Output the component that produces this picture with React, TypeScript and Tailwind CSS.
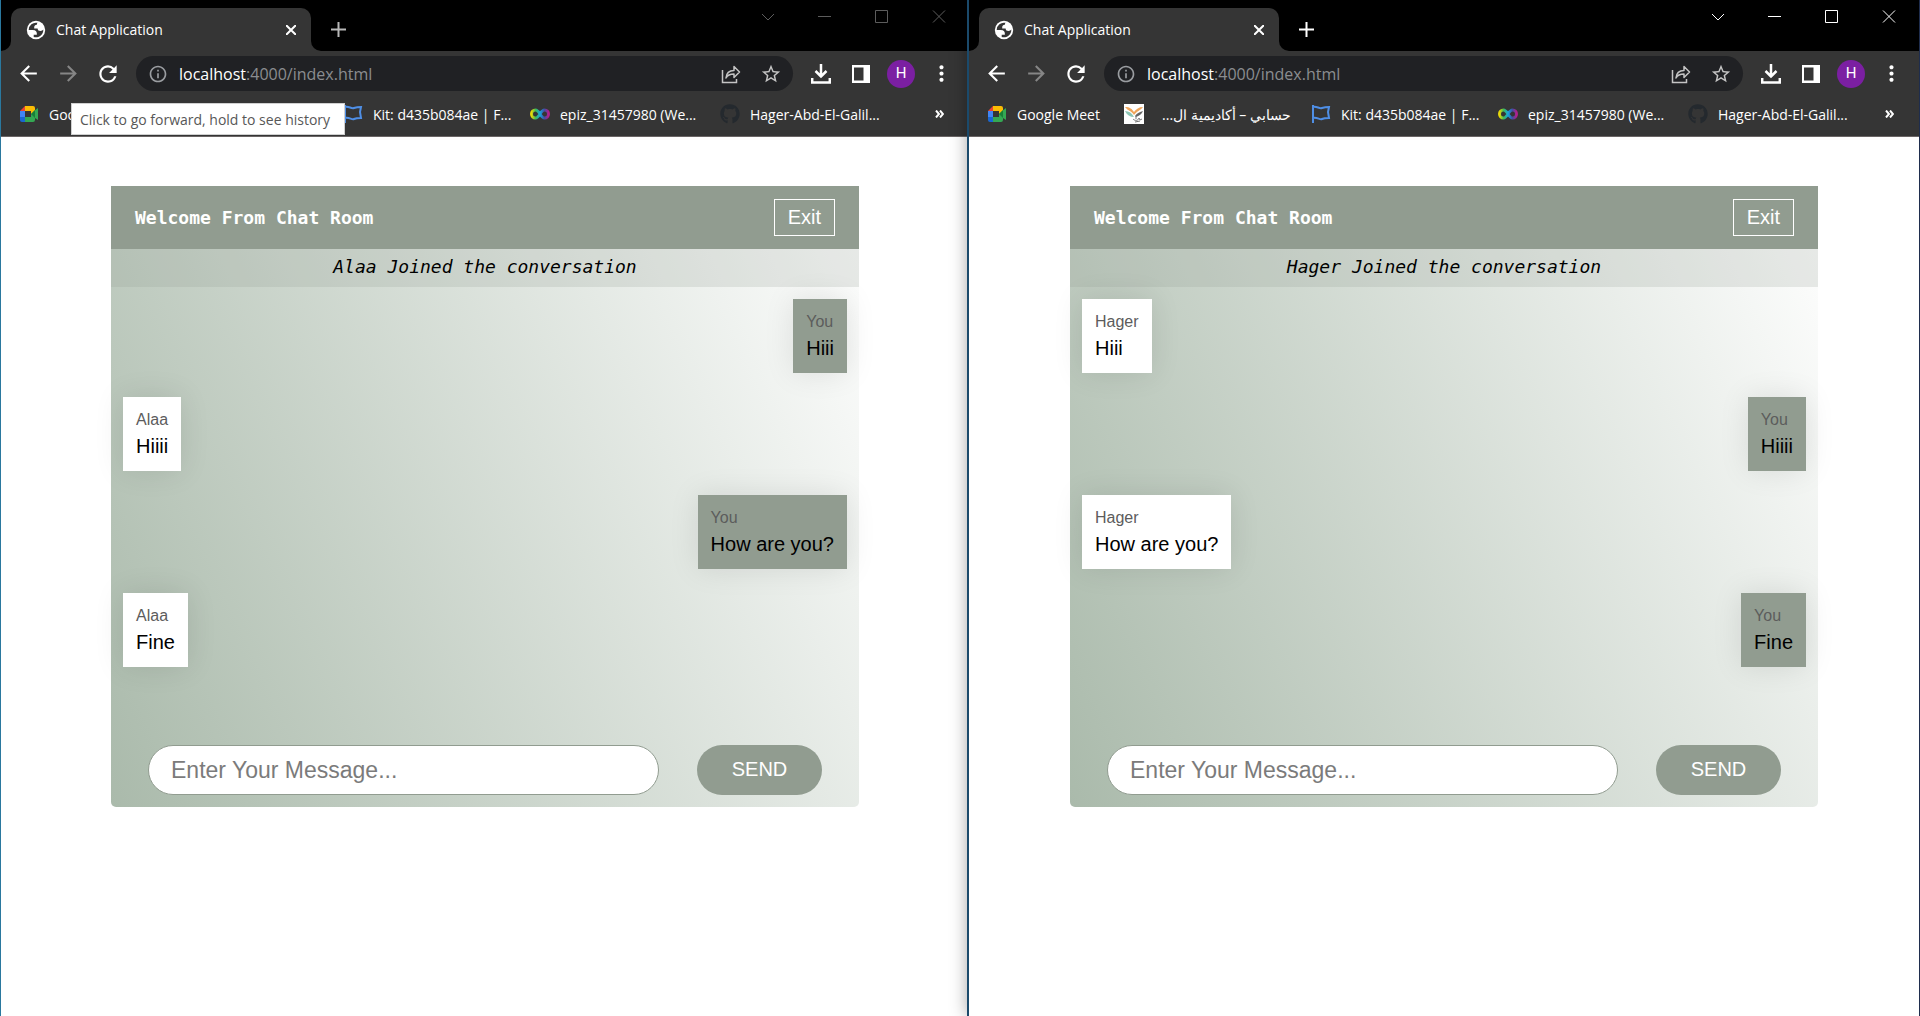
import type { ReactNode } from "react";
import {
  MdArrowBack,
  MdArrowForward,
  MdInfoOutline,
  MdMoreVert,
  MdRefresh,
  MdStarBorder,
} from "react-icons/md";
import { FaGithub } from "react-icons/fa";

type Message = { from: string; text: string };

function GlobeIcon() {
  return (
    <svg viewBox="0 0 24 24" className="size-[22px]">
      <circle cx="12" cy="12" r="10" fill="#fff" />
      <path
        fill="#353535"
        d="M4 12h4.400c3.407.022 4.922 1.730 4.543 5.127H9.488v2.470a8.004 8.004 0 0 0 10.498-8.083C19.327 12.504 18.332 13 17 13c-2.137 0-3.206-.916-3.206-2.750h-3.748c-.274-2.728.683-4.092 2.870-4.092 0-.975.327-1.597.811-1.970A8.004 8.004 0 0 0 4 12z"
      />
    </svg>
  );
}

function MeetIcon() {
  return (
    <svg viewBox="0 0 20 20" className="size-5">
      <path d="M1 7 6 2v5z" fill="#ea4335" />
      <path d="M1 7h5v6H1z" fill="#4285f4" />
      <path d="M1 13h5v5H3a2 2 0 0 1-2-2z" fill="#1967d2" />
      <path d="M6 2h8a2 2 0 0 1 2 2v5l-4 2V7H6z" fill="#fbbc04" />
      <path d="M6 13h6v-3l3-3 4-3v12l-3-2v2a2 2 0 0 1-2 2H6z" fill="#34a853" />
      <path d="m12 10 4-4v8z" fill="#188038" />
    </svg>
  );
}

function AcademyIcon() {
  return (
    <svg viewBox="0 0 20 20" className="size-5">
      <path d="M0 0h20v20H0z" fill="#fff" />
      <path d="M1 3c5 0 7 2 9 5 2-3 5-5 9-5-2 3-6 4-9 8-2-4-6-4-9-8z" fill="#efa55a" />
      <path d="M1 7c4 0 7 2 9 6-4 0-7-2-9-6z" fill="#8cc5b4" />
      <path d="M11 12c2-3 5-4 8-5-1 3-4 5-7 6z" fill="#666" />
      <path d="M9 15c2 2 5 2 6-1l1 2 2-1M11 18l5-1M12 12v3" fill="none" stroke="#777" />
    </svg>
  );
}

function FlagIcon() {
  return (
    <svg viewBox="0 0 20 20" className="size-5" fill="none" stroke="#4f8fe6" strokeWidth="2">
      <path d="M2 1v18M2 3c4-1 6 2 9 1s4-1 7-1l-1 5 1 6c-3 0-5 0-7 1s-5-2-9-1" />
    </svg>
  );
}

function InfinityIcon() {
  return (
    <svg viewBox="0 0 20 20" className="size-5" fill="none" strokeWidth="3">
      <defs>
        <linearGradient id="loop" x1="0" x2="1" y1="0" y2="0">
          <stop offset="0" stopColor="#e6d80a" />
          <stop offset=".25" stopColor="#3dbb58" />
          <stop offset=".5" stopColor="#18a5e0" />
          <stop offset=".75" stopColor="#3d4fa5" />
          <stop offset="1" stopColor="#b0208c" />
        </linearGradient>
      </defs>
      <path
        stroke="url(#loop)"
        d="M10 10C8 7 7 6 5.500 6a4 4 0 0 0 0 8C7 14 8 13 10 10s3-4 4.500-4a4 4 0 0 1 0 8C13 14 12 13 10 10z"
      />
    </svg>
  );
}

function ShareIcon() {
  return (
    <svg viewBox="0 0 20 20" className="size-5" fill="none" stroke="currentColor" strokeWidth="1.500">
      <path d="M1.500 6v12.500h14V15" />
      <path d="M5 14c.4-5 3-7.500 8-7.500V2.500l5.500 5.500-5.500 5.500V10c-4 0-6.500 1-8 4z" strokeLinejoin="round" />
    </svg>
  );
}

function DownloadIcon() {
  return (
    <svg viewBox="0 0 20 20" className="size-5" fill="none" stroke="currentColor" strokeWidth="2.500">
      <path d="M10 0v12M4.500 7l5.500 5.500L15.500 7M1.200 14v4.500h17.600V14" />
    </svg>
  );
}

function PanelIcon() {
  return (
    <svg viewBox="0 0 18 18" className="size-[18px]" fill="currentColor">
      <path fillRule="evenodd" d="M0 0h18v18H0zM2 2.500v13h9.500v-13z" />
    </svg>
  );
}

function CaptionButton({ label, children }: { label: string; children: ReactNode }) {
  return (
    <button aria-label={label} className="flex h-[34px] w-[57px] items-center justify-center">
      <svg viewBox="0 0 14 14" className="size-[14px]" fill="none" stroke="currentColor">
        {children}
      </svg>
    </button>
  );
}

function ToolButton({ label, children }: { label: string; children: ReactNode }) {
  return (
    <button aria-label={label} className="flex h-9 w-10 shrink-0 items-center justify-center">
      {children}
    </button>
  );
}

function Bookmark({ icon, width, rtl, children }: { icon: ReactNode; width: string; rtl?: boolean; children: ReactNode }) {
  return (
    <a href="#" className="flex shrink-0 items-center gap-2.5">
      {icon}
      <span dir={rtl ? "rtl" : "ltr"} className={`${width} whitespace-nowrap`}>
        {children}
      </span>
    </a>
  );
}

function BrowserWindow({ active, className, children }: { active?: boolean; className: string; children: ReactNode }) {
  return (
    <section className={`relative flex min-w-0 flex-col bg-white ${className}`}>
      <div className="flex h-[51px] justify-between bg-black">
        <div className="flex items-end">
          <span className="size-2.5 bg-[#353535]">
            <span className="block size-full rounded-br-[10px] bg-black" />
          </span>
          <div className="flex h-[43px] w-[300px] items-center rounded-t-[10px] bg-[#353535] pr-[10px] pl-[14px] text-white">
            <GlobeIcon />
            <span className="ml-[9px] flex-1 text-[14px]">Chat Application</span>
            <button aria-label="Close tab" className="flex size-5 items-center justify-center">
              <svg viewBox="0 0 10 10" className="size-[10px]" stroke="currentColor" strokeWidth="2">
                <path d="m0 0 10 10M10 0 0 10" />
              </svg>
            </button>
          </div>
          <span className="size-2.5 bg-[#353535]">
            <span className="block size-full rounded-bl-[10px] bg-black" />
          </span>
          <button
            aria-label="New tab"
            className={`flex h-[43px] w-[34px] items-center justify-center ${active ? "text-white" : "text-[#b8b8b8]"}`}
          >
            <svg viewBox="0 0 15 15" className="size-[15px]" stroke="currentColor" strokeWidth="2">
              <path d="M7.500 0v15M0 7.500h15" />
            </svg>
          </button>
        </div>
        <div className={`flex pr-0.5 ${active ? "text-white" : "text-[#5c5c5c]"}`}>
          <CaptionButton label="Search tabs">
            <path d="m1 4 6 6 6-6" />
          </CaptionButton>
          <CaptionButton label="Minimize">
            <path d="M0 6.500h13" />
          </CaptionButton>
          <CaptionButton label="Maximize">
            <path d="M.5.5h12v12H.5z" />
          </CaptionButton>
          <CaptionButton label="Close">
            <path d="m1 .5 12 12M13 .5l-12 12" />
          </CaptionButton>
        </div>
      </div>

      <div className="flex h-[45px] items-center bg-[#353535] pr-2 pl-[7px] text-white">
        <ToolButton label="Back">
          <MdArrowBack className="size-[25px]" />
        </ToolButton>
        <ToolButton label="Forward">
          <MdArrowForward className="size-[25px] text-[#868686]" />
        </ToolButton>
        <ToolButton label="Reload">
          <MdRefresh className="size-[26px]" />
        </ToolButton>
        <div className="mx-2 flex h-[35px] min-w-0 flex-1 items-center rounded-full bg-[#202124] pr-0.5 pl-3 text-[#9a9da1]">
          <MdInfoOutline className="size-5 shrink-0" />
          <a href="#" className="ml-[11px] flex-1 truncate text-[16px] text-[#8b8d90]">
            <span className="text-white">localhost</span>:4000/index.html
          </a>
          <span className="flex text-[#c4c4c4]">
            <ToolButton label="Share">
              <ShareIcon />
            </ToolButton>
            <ToolButton label="Bookmark this page">
              <MdStarBorder className="size-[22px]" />
            </ToolButton>
          </span>
        </div>
        <ToolButton label="Downloads">
          <DownloadIcon />
        </ToolButton>
        <ToolButton label="Side panel">
          <PanelIcon />
        </ToolButton>
        <ToolButton label="Profile">
          <span className="flex size-7 items-center justify-center rounded-full bg-[#7b1fa2] font-['Roboto',sans-serif] text-[15px]">
            H
          </span>
        </ToolButton>
        <ToolButton label="Menu">
          <MdMoreVert className="size-[25px]" />
        </ToolButton>
      </div>

      <nav className="flex h-[41px] items-center gap-5 overflow-hidden border-b border-[#6a6565] bg-[#353535] pr-[25px] pb-1 pl-[18px] text-[14px] text-white">
        <Bookmark icon={<MeetIcon />} width="w-[87px]">Google Meet</Bookmark>
        <Bookmark icon={<AcademyIcon />} width="w-[137px]" rtl>حسابي – أكاديمية ال...</Bookmark>
        <Bookmark icon={<FlagIcon />} width="w-[137px]">Kit: d435b084ae | F...</Bookmark>
        <Bookmark icon={<InfinityIcon />} width="w-[140px]">epiz_31457980 (We...</Bookmark>
        <Bookmark icon={<FaGithub className="size-5 text-[#24292e]" />} width="w-[137px]">
          Hager-Abd-El-Galil...
        </Bookmark>
        <button aria-label="More bookmarks" className="ml-auto">
          <svg viewBox="0 0 9 8" className="h-2 w-[9px]" fill="none" stroke="currentColor" strokeWidth="2">
            <path d="m1 .5 3 3.500-3 3.500M5 .5l3 3.500-3 3.500" />
          </svg>
        </button>
      </nav>

      <main className="flex flex-1 justify-center px-4 pt-[49px] pb-12">{children}</main>
    </section>
  );
}

function ChatRoom({ joined, messages }: { joined: string; messages: Message[] }) {
  return (
    <div className="flex min-h-[621px] w-full max-w-[748px] flex-col self-start rounded-b-[5px] bg-linear-65 from-[#aabaab] to-white font-['Liberation_Sans',Arial,sans-serif] text-[20px]">
      <header className="flex h-[63px] items-center justify-between bg-[#919c90] px-6 text-white">
        <h1 className="font-['DejaVu_Sans_Mono',monospace] text-[18px] font-bold">Welcome From Chat Room</h1>
        <button className="h-[37px] border border-white px-[13px] pb-0.5">Exit</button>
      </header>
      <p className="h-[38px] bg-[#919c90]/20 text-center font-['DejaVu_Sans_Mono',monospace] text-[18px] leading-9 font-medium text-black italic">
        {joined} Joined the conversation
      </p>
      <ul className="flex flex-1 flex-col gap-6 p-3">
        {messages.map((m, i) => (
          <li
            key={i}
            className={`px-[13px] pt-3 pb-2.5 shadow-[0_0_30px_rgba(0,0,0,0.1)] ${
              m.from === "You" ? "self-end bg-[#919c90]" : "self-start bg-white"
            }`}
          >
            <p className="text-[16px] leading-[22px] text-[#5c5c5c]">{m.from}</p>
            <p className="leading-[30px] text-black">{m.text}</p>
          </li>
        ))}
      </ul>
      <form className="flex gap-[38px] px-[37px] pb-3" onSubmit={(e) => e.preventDefault()}>
        <input
          type="text"
          aria-label="Message"
          placeholder="Enter Your Message..."
          className="h-[50px] min-w-0 flex-1 rounded-full border border-[#919c90] bg-white px-[22px] text-[23px] placeholder:text-[#7b7b7b]"
        />
        <button className="h-[50px] w-[125px] rounded-full bg-[#919c90] pb-0.5 text-white">SEND</button>
      </form>
    </div>
  );
}

export default function App() {
  return (
    <div className="grid min-h-screen grid-cols-[969fr_951fr] font-['Open_Sans','Noto_Sans',sans-serif]">
      <BrowserWindow className="border-l border-[#2a789e]">
        <ChatRoom
          joined="Alaa"
          messages={[
            { from: "You", text: "Hiii" },
            { from: "Alaa", text: "Hiiii" },
            { from: "You", text: "How are you?" },
            { from: "Alaa", text: "Fine" },
          ]}
        />
        <div
          role="tooltip"
          className="absolute top-[103px] left-[70px] flex h-8 items-center border border-[#d0d0d0] bg-white pr-[14px] pl-2 text-[14px] whitespace-nowrap text-[#575757]"
        >
          Click to go forward, hold to see history
        </div>
      </BrowserWindow>
      <BrowserWindow
        active
        className="-ml-0.5 border-r border-l-2 border-r-[#1f2d4d] border-l-[#1b4a6b] shadow-[0_0_16px_rgba(0,0,0,0.35)]"
      >
        <ChatRoom
          joined="Hager"
          messages={[
            { from: "Hager", text: "Hiii" },
            { from: "You", text: "Hiiii" },
            { from: "Hager", text: "How are you?" },
            { from: "You", text: "Fine" },
          ]}
        />
      </BrowserWindow>
    </div>
  );
}
